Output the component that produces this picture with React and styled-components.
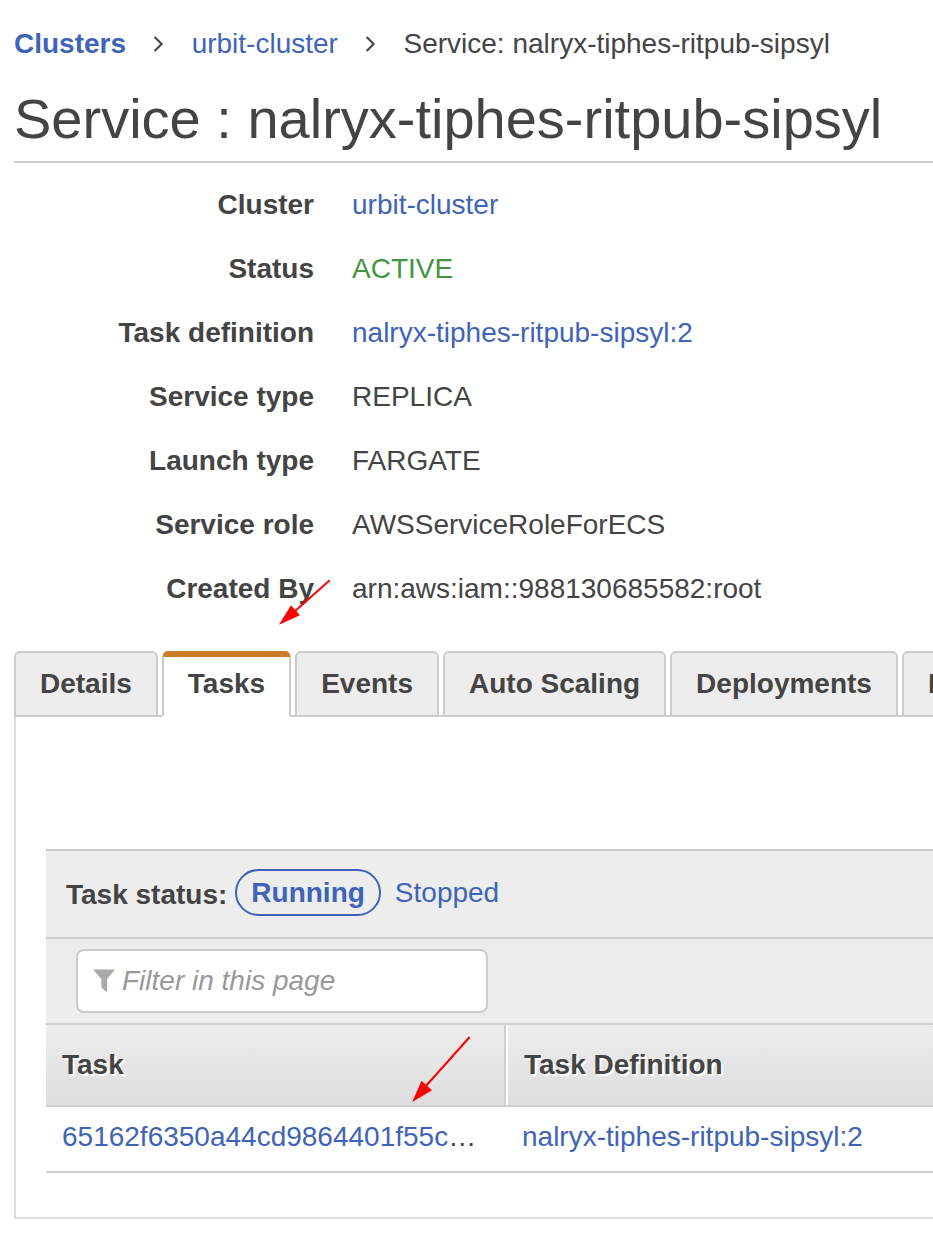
import React from "react";
import styled, { createGlobalStyle, css } from "styled-components";

const LINK = "#3f64b7";
const TEXT = "#444";
const LINE = "#ccc";

const GlobalStyle = createGlobalStyle`
  *, *::before, *::after { box-sizing: border-box; }
  body {
    margin: 0;
    background: #fff;
    color: ${TEXT};
    font: 28px/32px "Liberation Sans", Arial, sans-serif;
  }
`;

const Page = styled.main`
  position: relative;
  height: 1242px;
  padding: 28px 0 0 14px;
  overflow: hidden;
  white-space: nowrap;
`;

const Link = styled.a`
  color: ${LINK};
  font-weight: ${(p) => (p.$bold ? 700 : 400)};
`;

const Breadcrumbs = styled.nav`
  display: flex;
  align-items: center;
  height: 32px;
`;

const Separator = styled.svg`
  width: 11px;
  height: 18px;
  margin: 0 27.6px 0 27px;
  fill: none;
  stroke: ${TEXT};
  stroke-width: 2.1;
`;

const Title = styled.h1`
  margin: 27px 0 0;
  height: 76px;
  border-bottom: 2px solid ${LINE};
  font-size: 56px;
  font-weight: 400;
  line-height: 64px;
`;

const Properties = styled.dl`
  display: grid;
  grid-template-columns: 300px 1fr;
  column-gap: 38px;
  grid-auto-rows: 64px;
  margin: 10px 0 0;
  line-height: 64px;
`;

const Label = styled.dt`
  font-weight: 700;
  text-align: right;
`;

const Value = styled.dd`
  margin: 0;
  color: ${(p) => (p.$active ? "#459440" : TEXT)};
`;

const Tabs = styled.div`
  display: flex;
  gap: 4px;
  height: 66px;
  margin-top: 30px;
  box-shadow: inset 0 -2px ${LINE};
`;

const Tab = styled.div`
  flex: none;
  height: 66px;
  padding: 15px 24px 0;
  border: 2px solid ${LINE};
  border-radius: 6px 6px 0 0;
  background: #ededed;
  font-weight: 700;
  ${(p) =>
    p.$active &&
    css`
      position: relative;
      border-top: 0;
      border-bottom-color: #fff;
      background: #fff;
      padding-top: 17px;
      &::before {
        content: "";
        position: absolute;
        inset: 0 -1px auto;
        height: 6px;
        border-radius: 5px 5px 0 0;
        background: #cb7c29;
      }
    `}
`;

const Panel = styled.section`
  height: 502px;
  padding: 132px 0 0 30px;
  border: solid #ddd;
  border-width: 0 0 2px 2px;
`;

const StatusBar = styled.div`
  display: flex;
  align-items: flex-start;
  height: 88px;
  padding: 18px 0 0 20px;
  border-top: 2px solid ${LINE};
  background: #ededed;
`;

const StatusLabel = styled.span`
  padding-top: 10px;
  font-weight: 700;
`;

const Pill = styled.a`
  height: 47px;
  margin-left: 8px;
  padding: 6px 14px 0;
  border: 2px solid ${LINK};
  border-radius: 24px;
  color: ${LINK};
  font-weight: 700;
`;

const StatusLink = styled(Link)`
  margin: 8px 0 0 14px;
`;

const FilterBar = styled.div`
  height: 86px;
  padding: 10px 0 0 30px;
  border-top: 2px solid ${LINE};
  background: #ededed;
`;

const FilterField = styled.div`
  display: flex;
  align-items: center;
  width: 412px;
  height: 64px;
  padding-left: 14px;
  border: 2px solid ${LINE};
  border-radius: 8px;
  background: #fff;
  color: #999;
  font-style: italic;
`;

const Funnel = styled.svg`
  width: 24px;
  height: 24px;
  margin-right: 6px;
  fill: #aaa;
`;

const TableHead = styled.div`
  display: grid;
  grid-template-columns: 462px 1fr;
  height: 84px;
  border: solid #d0d0d0;
  border-width: 2px 0;
  background: linear-gradient(#ededed, #dedede);
  font-weight: 700;
  text-shadow: 2px 2px 0 #fff;
`;

const HeadCell = styled.div`
  padding: 24px 16px 0;
  border-right: ${(p) => (p.$divided ? "2px solid #fff" : "0")};
  box-shadow: ${(p) => (p.$divided ? "inset -2px 0 #d0d0d0" : "none")};
`;

const TableRow = styled.div`
  display: grid;
  grid-template-columns: 460px 1fr;
  height: 66px;
  padding-top: 14px;
  border-bottom: 2px solid #d0d0d0;
`;

const Cell = styled.div`
  padding-left: 16px;
`;

const Annotations = styled.svg`
  position: absolute;
  inset: 0;
  width: 933px;
  height: 1242px;
  pointer-events: none;
  fill: #f00;
  stroke: #f00;
`;

const Chevron = () => (
  <Separator viewBox="0 0 11 18">
    <path d="M1.6 2 8.6 9 1.6 16" />
  </Separator>
);

const SERVICE = "nalryx-tiphes-ritpub-sipsyl";

const properties = [
  ["Cluster", "urbit-cluster", "link"],
  ["Status", "ACTIVE", "active"],
  ["Task definition", `${SERVICE}:2`, "link"],
  ["Service type", "REPLICA"],
  ["Launch type", "FARGATE"],
  ["Service role", "AWSServiceRoleForECS"],
  ["Created By", "arn:aws:iam::988130685582:root"],
];

const tabs = ["Details", "Tasks", "Events", "Auto Scaling", "Deployments", "Metrics"];

export default function App() {
  return (
    <>
      <GlobalStyle />
      <Page>
        <Breadcrumbs>
          <Link $bold>Clusters</Link>
          <Chevron />
          <Link>urbit-cluster</Link>
          <Chevron />
          <span>Service: {SERVICE}</span>
        </Breadcrumbs>
        <Title>Service : {SERVICE}</Title>
        <Properties>
          {properties.map(([label, value, kind]) => (
            <React.Fragment key={label}>
              <Label>{label}</Label>
              <Value $active={kind === "active"}>
                {kind === "link" ? <Link>{value}</Link> : value}
              </Value>
            </React.Fragment>
          ))}
        </Properties>
        <Tabs>
          {tabs.map((name) => (
            <Tab key={name} $active={name === "Tasks"}>
              {name}
            </Tab>
          ))}
        </Tabs>
        <Panel>
          <StatusBar>
            <StatusLabel>Task status:</StatusLabel>
            <Pill>Running</Pill>
            <StatusLink>Stopped</StatusLink>
          </StatusBar>
          <FilterBar>
            <FilterField>
              <Funnel viewBox="0 0 24 24">
                <path d="M1 .5h22L15.2 10v12.5h-1.6L9.3 18.4V10z" />
              </Funnel>
              Filter in this page
            </FilterField>
          </FilterBar>
          <TableHead>
            <HeadCell $divided>Task</HeadCell>
            <HeadCell>Task Definition</HeadCell>
          </TableHead>
          <TableRow>
            <Cell>
              <Link>65162f6350a44cd9864401f55c</Link>…
            </Cell>
            <Cell>
              <Link>{SERVICE}:2</Link>
            </Cell>
          </TableRow>
        </Panel>
        <Annotations viewBox="0 0 933 1242">
          <path d="M329.7 580.3 294 612" strokeWidth="2" />
          <path d="M279 624.7 291 605.3 300 615.3z" stroke="none" />
          <path d="M469.7 1037 425 1087" strokeWidth="2" />
          <path d="M412.2 1102 421.5 1080.8 432 1090.2z" stroke="none" />
        </Annotations>
      </Page>
    </>
  );
}
